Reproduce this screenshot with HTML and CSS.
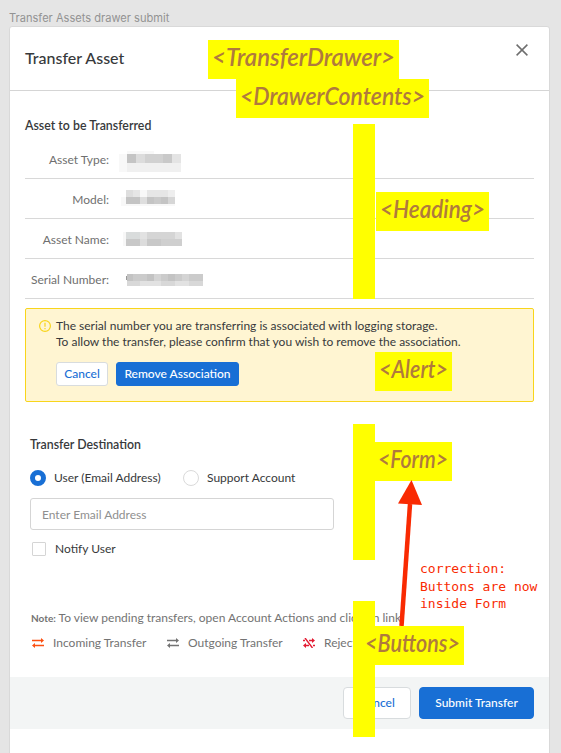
FILE: index.html
```html
<!DOCTYPE html>
<html lang="en">
<head>
<meta charset="utf-8">
<title>Transfer Assets drawer submit</title>
<link rel="stylesheet" href="styles.css">
</head>
<body>
<div class="canvas">
  <div class="frame-name">Transfer Assets drawer submit</div>
  <main class="drawer">
    <header class="drawer-header">
      <h1>Transfer Asset</h1>
      <svg class="close" viewBox="0 0 12 12"><path d="M.6.6l10.8 10.8M11.4.6L.6 11.4"/></svg>
    </header>

    <section class="asset">
      <h2>Asset to be Transferred</h2>
      <dl>
        <div class="row"><dt>Asset Type:</dt><dd>
          <svg class="redacted" width="90" height="24" viewBox="0 0 90 24" shape-rendering="crispEdges">
            <path fill="#f8f8f8" d="M0 4h8v9H0zM8 1h27v3H8zM0 13h8v9H0z"/><path fill="#c4c4c4" d="M8 4h9v9H8z"/><path fill="#dcdcdc" d="M17 4h9v9h-9z"/><path fill="#d1d1d1" d="M26 4h18v9H26z"/><path fill="#c9c9c9" d="M44 4h9v9h-9z"/><path fill="#e4e4e4" d="M53 4h9v9h-9z"/><path fill="#f0f0f0" d="M8 13h54v9H8z"/>
          </svg></dd></div>
        <div class="row"><dt>Model:</dt><dd>
          <svg class="redacted" width="90" height="24" viewBox="0 0 90 24" shape-rendering="crispEdges">
            <path fill="#f8f8f8" d="M2 7h5v9H2zM21 0h7v7h-7zM7 14h49v2H7z"/><path fill="#dedede" d="M7 0h7v7H7zM21 7h7v7h-7z"/><path fill="#e6e6e6" d="M14 0h7v7h-7zM28 0h21v7H28z"/><path fill="#eee" d="M49 0h7v7h-7z"/><path fill="#c4c4c4" d="M7 7h14v7H7zM28 7h7v7h-7zM42 7h7v7h-7z"/><path fill="#cacaca" d="M35 7h7v7h-7z"/><path fill="#d6d6d6" d="M49 7h7v7h-7z"/>
          </svg></dd></div>
        <div class="row"><dt>Asset Name:</dt><dd>
          <svg class="redacted" width="90" height="24" viewBox="0 0 90 24" shape-rendering="crispEdges">
            <path fill="#f7f7f7" d="M4 2h3v14H4z"/><path fill="#d9dcdc" d="M7 2h14v7H7z"/><path fill="#e2e2e2" d="M21 2h7v7h-7zM56 2h7v7h-7z"/><path fill="#d5d5d5" d="M28 2h28v7H28z"/><path fill="#c8c8c8" d="M7 9h14v7H7zM28 9h14v7H28z"/><path fill="#dcdcdc" d="M21 9h7v7h-7z"/><path fill="#cfcfcf" d="M42 9h21v7H42z"/>
          </svg></dd></div>
        <div class="row"><dt>Serial Number:</dt><dd>
          <svg class="redacted" width="90" height="24" viewBox="0 0 90 24" shape-rendering="crispEdges">
            <path fill="#999" d="M7 6h1v4H7z"/><path fill="#c3c3c3" d="M8 4h6v7H8zM28 4h7v7h-7zM49 4h7v7h-7z"/><path fill="#cbcbcb" d="M14 4h14v7H14zM42 4h7v7h-7zM56 4h7v7h-7zM70 4h14v7H70z"/><path fill="#d4d4d4" d="M35 4h7v7h-7zM63 4h7v7h-7z"/><path fill="#d8d8d8" d="M8 11h13v5H8zM42 11h14v5H42zM70 11h14v5H70z"/><path fill="#e2e2e2" d="M21 11h21v5H21zM56 11h14v5H56z"/>
          </svg></dd></div>
      </dl>
    </section>

    <section class="alert">
      <svg class="alert-icon" viewBox="0 0 12 12"><circle cx="6" cy="6" r="5.4"/><path d="M6 2.8v4M6 8v1.3"/></svg>
      <div class="alert-body">
        <p>The serial number you are transferring is associated with logging storage.</p>
        <p>To allow the transfer, please confirm that you wish to remove the association.</p>
        <div class="alert-actions">
          <button class="button small">Cancel</button>
          <button class="button small primary remove">Remove Association</button>
        </div>
      </div>
    </section>

    <section class="destination">
      <h2>Transfer Destination</h2>
      <div class="radios">
        <label class="radio"><span class="dot selected"></span><span class="user-label">User (Email Address)</span></label>
        <label class="radio"><span class="dot"></span><span>Support Account</span></label>
      </div>
      <div class="field">Enter Email Address</div>
      <label class="check"><span class="box"></span>Notify User</label>
    </section>

    <section class="notes">
      <p><b>Note:</b> <span>To view pending transfers, open Account Actions and click on link.</span></p>
      <div class="legend">
        <span class="key incoming"><svg viewBox="0 0 12 10"><path class="line" d="M0 2.5h9M3 7.5h9"/><path class="tip" d="M9 0l3 2.500L9 5zM3 5L0 7.500 3 10z"/></svg>Incoming Transfer</span>
        <span class="key outgoing"><svg viewBox="0 0 12 10"><path class="line" d="M0 2.500h9M3 7.500h9"/><path class="tip" d="M9 0l3 2.500L9 5zM3 5L0 7.500 3 10z"/></svg>Outgoing Transfer</span>
        <span class="key rejected"><svg viewBox="0 0 12 10"><path class="line" d="M0 2.500h2M6 2.500h3M3 7.500h3M10 7.500h2M2 0l7.500 10"/><path class="tip" d="M9 0l3 2.500L9 5zM3 5L0 7.500 3 10z"/></svg>Reject</span>
      </div>
    </section>

    <footer class="drawer-footer">
      <button class="button cancel">Cancel</button>
      <button class="button primary submit">Submit Transfer</button>
    </footer>
  </main>

  <div class="bar bar-heading"></div>
  <div class="bar bar-form"></div>
  <svg class="tag tag-drawer" width="191" height="39"><text x="4" y="26" textLength="183" lengthAdjust="spacingAndGlyphs">&lt;TransferDrawer&gt;</text></svg>
  <svg class="tag tag-contents" width="193" height="39"><text x="4" y="26" textLength="185" lengthAdjust="spacingAndGlyphs">&lt;DrawerContents&gt;</text></svg>
  <svg class="tag tag-heading" width="113" height="39"><text x="4" y="26" textLength="105" lengthAdjust="spacingAndGlyphs">&lt;Heading&gt;</text></svg>
  <svg class="tag tag-alert" width="77" height="39"><text x="4" y="26" textLength="69" lengthAdjust="spacingAndGlyphs">&lt;Alert&gt;</text></svg>
  <svg class="tag tag-form" width="77" height="39"><text x="3" y="26" textLength="70" lengthAdjust="spacingAndGlyphs">&lt;Form&gt;</text></svg>
  <svg class="arrow" width="30" height="150" viewBox="0 0 30 150"><path d="M14 24L5.500 146" stroke-width="4.500"/><path class="head" d="M15.500 0L2 23.500 26 25z"/></svg>
  <div class="bar bar-buttons"></div>
  <svg class="tag tag-buttons" width="102" height="39"><text x="3" y="26" textLength="95" lengthAdjust="spacingAndGlyphs">&lt;Buttons&gt;</text></svg>
  <div class="correction">correction:<br>Buttons are now<br>inside Form</div>
</div>
</body>
</html>
```
FILE: styles.css
```css
* { box-sizing: border-box; }
body { margin: 0; background: #e5e5e5; font: 12px/16px Lato, "Liberation Sans", sans-serif; color: #37393b; }
h1, h2, p, dl, dd { margin: 0; }
.canvas { position: relative; width: 561px; height: 753px; overflow: hidden; padding-left: 9px; }
.frame-name { height: 26px; padding-top: 10px; font: 11.100px/16px Inter, sans-serif; color: #939393; white-space: nowrap; }
.drawer { width: 541px; height: 740px; background: #fff; border: 1px solid #d9d9d9; border-radius: 3px 3px 0 0; }
.drawer-header { height: 64px; border-bottom: 1px solid #d5d5d5; display: flex; align-items: flex-start; justify-content: space-between; padding: 20px 21px 0 15px; }
h1 { font-size: 16px; line-height: 22px; font-weight: 500; }
.close { width: 12px; height: 12px; margin-top: -3px; fill: none; stroke: #6e6e6e; stroke-width: 1.5; }
h2 { font-size: 12.350px; line-height: 16px; font-weight: 600; }
.asset { padding: 27px 15px 0; }
.asset h2 { margin-bottom: 5px; }
.row { display: flex; height: 40px; border-bottom: 1px solid #d8d8d8; color: #6f6f6f; }
dt { width: 84px; padding-top: 13px; text-align: right; white-space: nowrap; }
dd { margin: 11px 0 0 10px; }
.redacted { display: block; }
.alert { display: flex; height: 94px; margin: 9px 15px 0; padding: 9px 12px; background: #fff5d2; border: 1px solid #f8d51b; border-radius: 2px; }
.alert-icon { width: 12px; height: 12px; margin: 2px 5px 0 1px; fill: none; stroke: #f8d51b; stroke-width: 1.2; }
.alert p { white-space: nowrap; }
.alert-actions { display: flex; gap: 8px; margin-top: 12px; }
.button { height: 32px; padding: 0; border: 1px solid #d8dcde; border-radius: 4px; background: #fff; color: #186fd5; font: 500 12px/16px Lato, sans-serif; }
.button.primary { background: #186fd5; border-color: #186fd5; color: #fff; }
.button.small { width: 52px; height: 24px; border-radius: 3px; }
.button.remove { width: 123px; }
.destination { padding: 35px 20px 0; }
.radios { display: flex; margin-top: 17px; height: 16px; }
.radio { display: flex; align-items: center; gap: 8px; white-space: nowrap; }
.radio + .radio { margin-left: 22px; }
.user-label { width: 107px; }
.dot { width: 16px; height: 16px; border: 1px solid #dadada; border-radius: 50%; }
.dot.selected { border: 5px solid #186fd5; }
.field { width: 304px; height: 32px; margin-top: 12px; padding: 8px 11px; border: 1px solid #d5d5d5; border-radius: 3px; color: #8f8f8f; line-height: 16px; }
.check { display: flex; align-items: center; gap: 9px; height: 16px; margin: 11px 0 0 2px; }
.box { width: 14px; height: 14px; border: 1px solid #d5d5d5; border-radius: 1px; }
.notes { padding: 53px 0 0 21px; color: #737373; white-space: nowrap; }
.notes b { font-size: 10px; font-weight: 700; }
.legend { display: flex; margin: 9px 0 0 1px; }
.key { display: flex; align-items: center; gap: 9px; }
.key svg { width: 12px; height: 10px; stroke: currentColor; fill: currentColor; }
.key .line { fill: none; stroke-width: 1.4; }
.key .tip { stroke: none; }
.incoming { width: 135px; }
.outgoing { width: 136px; }
.incoming svg { color: #fb5012; }
.rejected svg { color: #e31b32; }
.drawer-footer { display: flex; justify-content: flex-end; gap: 8px; height: 52px; margin-top: 26px; padding: 10px 15px; background: #f3f5f5; }
.cancel { width: 68px; }
.submit { width: 115px; }
/* Review annotations lying over the mockup */
.bar, .tag { position: absolute; background: #ff0; }
.bar { left: 353px; width: 22px; }
.bar-heading { top: 124px; height: 175px; }
.bar-form { top: 424px; height: 136px; }
.bar-buttons { top: 601px; height: 136px; }
.tag text { font: italic 600 24px Lato, sans-serif; fill: #b07a3d; }
.tag-drawer { left: 208px; top: 40px; }
.tag-contents { left: 236px; top: 79px; }
.tag-heading { left: 376px; top: 192px; }
.tag-alert { left: 375px; top: 352px; }
.tag-form { left: 375px; top: 442px; }
.tag-buttons { left: 362px; top: 626px; }
.arrow { position: absolute; left: 396px; top: 480px; fill: none; stroke: #f92a02; }
.arrow .head { fill: #f92a02; stroke: none; }
.correction { position: absolute; left: 420px; top: 560px; font: 13px/17.500px "DejaVu Sans Mono", monospace; color: #f92a02; white-space: nowrap; }
```
